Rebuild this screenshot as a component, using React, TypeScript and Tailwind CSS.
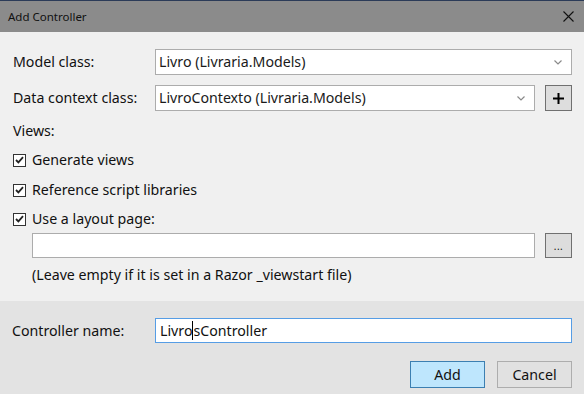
import React from 'react';

function Chevron() {
  return (
    <svg width="8" height="5" viewBox="0 0 8 5" className="shrink-0">
      <path d="M0.5 0.5 L4 4 L7.5 0.5" fill="none" stroke="#8a8a8a" strokeWidth="1.2" />
    </svg>
  );
}

function Select({ value, width }: { value: string; width: string }) {
  return (
    <div
      className={`${width} h-[26px] flex items-center justify-between bg-white border border-[#acacac] pl-[3px] pr-[9px] text-[#1a1a1a]`}
    >
      <span>{value}</span>
      <Chevron />
    </div>
  );
}

function Check({ label }: { label: string }) {
  return (
    <div className="flex items-center h-[20px]">
      <div className="w-[13px] h-[13px] border border-[#333] bg-white flex items-center justify-center">
        <svg width="9" height="8" viewBox="0 0 9 8">
          <path d="M1 4 L3.4 6.4 L8 1.2" fill="none" stroke="#222" strokeWidth="1.8" />
        </svg>
      </div>
      <span className="ml-[6px]">{label}</span>
    </div>
  );
}

export default function App() {
  return (
    <div className="w-[584px] h-[394px] flex flex-col overflow-hidden text-[14.2px] text-[#111] font-['Noto_Sans',sans-serif]">
      <div className="h-px bg-[#2b3b58]" />
      <div className="h-[31px] bg-[#8b8b8b] flex items-center justify-between pl-[8px] pr-[10px]">
        <span className="text-[11.5px] text-[#111]">Add Controller</span>
        <svg width="11" height="11" viewBox="0 0 11 11">
          <path d="M0.5 0.5 L10.5 10.5 M10.5 0.5 L0.5 10.5" stroke="#111" strokeWidth="1.1" />
        </svg>
      </div>

      <div className="flex-1 bg-[#f0f0f0] pl-[13px] pr-[12px] pt-[17px] flex flex-col">
        <div className="flex items-center h-[26px]">
          <span className="w-[142px]">Model class:</span>
          <Select value="Livro (Livraria.Models)" width="w-[417px]" />
        </div>
        <div className="flex items-center h-[26px] mt-[10px]">
          <span className="w-[142px]">Data context class:</span>
          <Select value="LivroContexto (Livraria.Models)" width="w-[380px]" />
          <div className="ml-[10px] w-[27px] h-[26px] bg-[#dddddd] border border-[#707070] flex items-center justify-center">
            <svg width="11" height="11" viewBox="0 0 11 11">
              <path d="M5.5 0 V11 M0 5.5 H11" stroke="#000" strokeWidth="2" />
            </svg>
          </div>
        </div>
        <div className="h-[20px] mt-[10px] flex items-center">Views:</div>
        <div className="mt-[9px]">
          <Check label="Generate views" />
        </div>
        <div className="mt-[10px]">
          <Check label="Reference script libraries" />
        </div>
        <div className="mt-[9px]">
          <Check label="Use a layout page:" />
        </div>
        <div className="flex items-center mt-[4px] pl-[19px]">
          <div className="w-[503px] h-[25px] bg-white border border-[#acacac]" />
          <div className="ml-[10px] w-[27px] h-[25px] bg-[#dddddd] border border-[#707070] flex items-end justify-center pb-[6px]">
            <span className="text-[10px] leading-none tracking-[0.5px]">...</span>
          </div>
        </div>
        <div className="h-[20px] mt-[7px] pl-[19px] flex items-center">
          (Leave empty if it is set in a Razor _viewstart file)
        </div>
      </div>

      <div className="h-[93px] bg-[#e3e3e3] pl-[12px] pr-[12px] pt-[17px] flex flex-col">
        <div className="flex items-center h-[25px]">
          <span className="w-[143px]">Controller name:</span>
          <div className="w-[417px] h-[25px] bg-white border border-[#569de5] flex items-center pl-[4px]">
            <span>Livro</span>
            <span className="w-px h-[19px] bg-black" />
            <span>sController</span>
          </div>
        </div>
        <div className="flex justify-end mt-[18px] gap-[12px]">
          <div className="w-[75px] h-[27px] bg-[#bee6fd] border border-[#3c7fb1] flex items-center justify-center">
            Add
          </div>
          <div className="w-[75px] h-[27px] bg-[#e1e1e1] border border-[#adadad] flex items-center justify-center">
            Cancel
          </div>
        </div>
      </div>
    </div>
  );
}
